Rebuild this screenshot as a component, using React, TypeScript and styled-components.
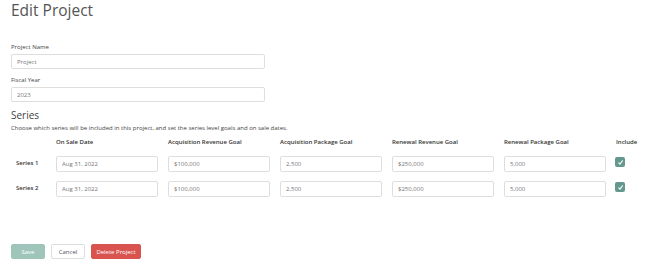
import React from 'react';
import styled, { createGlobalStyle } from 'styled-components';

const GlobalStyle = createGlobalStyle`
  body {
    margin: 0;
    background: #fff;
    font-family: "Open Sans", "Liberation Sans", sans-serif;
    color: #333;
  }
`;

const Page = styled.div`
  padding: 0 11px;
  width: 670px;
  height: 276px;
  box-sizing: border-box;
  display: flex;
  flex-direction: column;
`;

const Title = styled.h1`
  margin: 0;
  font-size: 15.5px;
  line-height: 20px;
  font-weight: 400;
  color: #555;
`;

const Field = styled.div`
  display: flex;
  flex-direction: column;
  margin-top: ${(p: { $top: number }) => p.$top}px;
`;

const Label = styled.label`
  font-size: 6px;
  line-height: 8px;
  color: #444;
  margin-bottom: 3px;
`;

const TextInput = styled.input<{ $width?: number; $height?: number }>`
  box-sizing: border-box;
  width: ${(p) => p.$width ?? 254}px;
  height: ${(p) => p.$height ?? 15}px;
  border: 1px solid #dedede;
  border-radius: 2px;
  padding: 0 5px;
  font-family: "Open Sans", "Liberation Sans", sans-serif;
  font-size: 6px;
  color: #777;
  background: #fff;
  outline: none;
`;

const SectionTitle = styled.h2`
  margin: 7px 0 0;
  font-size: 10px;
  line-height: 12px;
  font-weight: 400;
  color: #444;
`;

const Description = styled.p`
  margin: 3px 0 0;
  font-size: 6px;
  line-height: 8px;
  color: #444;
`;

const SeriesGrid = styled.div`
  display: grid;
  grid-template-columns: 35px repeat(5, 102px) auto;
  column-gap: 10px;
  row-gap: 9px;
  margin-top: 6px;
  align-items: start;
`;

const HeadCell = styled.div`
  font-size: 6px;
  line-height: 8px;
  font-weight: 600;
  color: #333;
  margin-bottom: 1px;
`;

const RowLabel = styled.div`
  font-size: 6px;
  line-height: 8px;
  font-weight: 600;
  color: #333;
  padding: 3px 0 0 5px;
`;

const Check = styled.span`
  display: flex;
  align-items: center;
  justify-content: center;
  width: 10px;
  height: 10px;
  margin: 1px 0 0 -1px;
  border-radius: 2px;
  background: #64978e;
`;

const Actions = styled.div`
  display: flex;
  gap: 6px;
  margin-top: 47px;
`;

const Button = styled.button<{ $variant: 'save' | 'cancel' | 'danger'; $width: number }>`
  box-sizing: border-box;
  width: ${(p) => p.$width}px;
  height: 15px;
  padding: 0;
  border-radius: 2px;
  font-family: "Open Sans", "Liberation Sans", sans-serif;
  font-size: 6px;
  border: 1px solid
    ${(p) => (p.$variant === 'save' ? '#9fc5bb' : p.$variant === 'danger' ? '#d9534f' : '#dedede')};
  background: ${(p) => (p.$variant === 'save' ? '#9fc5bb' : p.$variant === 'danger' ? '#d9534f' : '#fff')};
  color: ${(p) => (p.$variant === 'cancel' ? '#555' : '#fff')};
`;

const columns = [
  'On Sale Date',
  'Acquisition Revenue Goal',
  'Acquisition Package Goal',
  'Renewal Revenue Goal',
  'Renewal Package Goal',
];

const series = [
  { name: 'Series 1', values: ['Aug 31, 2022', '$100,000', '2,500', '$250,000', '5,000'] },
  { name: 'Series 2', values: ['Aug 31, 2022', '$100,000', '2,500', '$250,000', '5,000'] },
];

const CheckMark = () => (
  <svg width="7" height="7" viewBox="0 0 10 10">
    <path d="M2.5 5.5 L4.3 7.3 L7.8 2.5" fill="none" stroke="#fff" strokeWidth="1.6" strokeLinecap="round" strokeLinejoin="round" />
  </svg>
);

const App: React.FC = () => (
  <>
    <GlobalStyle />
    <Page>
      <Title>Edit Project</Title>
      <Field $top={23}>
        <Label>Project Name</Label>
        <TextInput defaultValue="Project" />
      </Field>
      <Field $top={7}>
        <Label>Fiscal Year</Label>
        <TextInput defaultValue="2023" />
      </Field>

      <SectionTitle>Series</SectionTitle>
      <Description>
        Choose which series will be included in this project, and set the series level goals and on sale dates.
      </Description>

      <SeriesGrid>
        <div />
        {columns.map((c) => (
          <HeadCell key={c}>{c}</HeadCell>
        ))}
        <HeadCell>Include</HeadCell>
        {series.map((s) => (
          <React.Fragment key={s.name}>
            <RowLabel>{s.name}</RowLabel>
            {s.values.map((v, i) => (
              <TextInput key={i} $width={102} $height={16} defaultValue={v} />
            ))}
            <Check>
              <CheckMark />
            </Check>
          </React.Fragment>
        ))}
      </SeriesGrid>

      <Actions>
        <Button $variant="save" $width={34}>Save</Button>
        <Button $variant="cancel" $width={34}>Cancel</Button>
        <Button $variant="danger" $width={50}>Delete Project</Button>
      </Actions>
    </Page>
  </>
);

export default App;
